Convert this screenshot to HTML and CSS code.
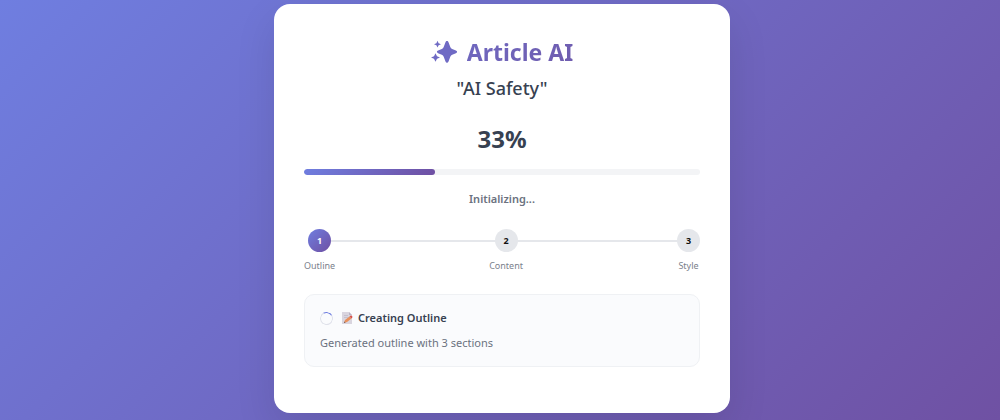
FILE: index.html
```html
<!DOCTYPE html>
<html lang="en">
<head>
    <meta charset="UTF-8">
    <meta name="viewport" content="width=device-width, initial-scale=1.0">
    <title>Article AI</title>
    <link rel="stylesheet" href="styles.css">
</head>
<body>
    <main class="card">
        <h1 class="logo">
            <svg class="logo-icon" viewBox="0 0 26 24" aria-hidden="true">
                <g fill="#6f6ac4">
                    <path d="M16 1c.8 0 1.200.4 1.500 1.200l1.800 4.800q.5 1.400 1.900 1.900l3.700 1.500c1.600.6 1.600 2.300 0 2.900l-3.700 1.500q-1.400.5-1.900 1.900l-1.800 4.800c-.6 1.600-2.400 1.600-3 0l-1.800-4.800q-.5-1.400-1.900-1.900l-3.700-1.500c-1.600-.6-1.600-2.300 0-2.900l3.700-1.500q1.400-.5 1.900-1.900l1.800-4.800c.3-.8.700-1.200 1.500-1.200z"/>
                    <path d="M6.500.8l1.100 2.400 2.400 1-2.400 1-1.100 2.400-1.100-2.400-2.400-1 2.400-1z"/>
                    <path d="M4.500 13.200l1.500 3 3 1.300-3 1.300-1.500 3-1.500-3-3-1.300 3-1.300z"/>
                </g>
            </svg>
            <span class="logo-text">Article AI</span>
        </h1>
        <h2 class="topic">"AI Safety"</h2>

        <div class="percent">33%</div>
        <div class="progress" role="progressbar" aria-label="Progress" aria-valuenow="33" aria-valuemin="0" aria-valuemax="100">
            <div class="progress-fill" style="width: 33%"></div>
        </div>
        <p class="status">Initializing...</p>

        <ol class="steps">
            <li class="step active"><span class="step-number">1</span>Outline</li>
            <li class="step"><span class="step-number">2</span>Content</li>
            <li class="step"><span class="step-number">3</span>Style</li>
        </ol>

        <section class="task">
            <h3 class="task-title">
                <span class="spinner"></span>
                <svg class="task-icon" viewBox="0 0 12 12" aria-hidden="true">
                    <path d="M1 0h7l3 3v9H1z" fill="#d9d5df"/>
                    <path d="M8 0l3 3H8z" fill="#b9b3c4"/>
                    <path d="M3 3.500h4M3 5.500h4" stroke="#bcb7c6" stroke-width=".7"/>
                    <path d="M3 11l1-3 4.500-3.500 2 2L6 10z" fill="#e8905c"/>
                    <path d="M8.500 4.500l1-.8c1-.5 2.400.8 1.800 1.800l-.8 1z" fill="#d8504a"/>
                    <path d="M3 11l.5-1.500 1 1z" fill="#5b4a4a"/>
                </svg>
                Creating Outline
            </h3>
            <p class="task-text">Generated outline with 3 sections</p>
        </section>
    </main>
</body>
</html>
```
FILE: styles.css
```css
* {
    margin: 0;
    padding: 0;
    box-sizing: border-box;
}

body {
    min-height: 100vh;
    display: flex;
    justify-content: center;
    align-items: flex-start;
    padding: 4px 0 4px 4px;
    font-family: "Noto Sans", "Open Sans", sans-serif;
    color: #374151;
    background: linear-gradient(135deg, #6f7ee0 0%, #6f51a3 100%);
}

.card {
    width: 100%;
    max-width: 456px;
    padding: 32px 30px 46px;
    background: white;
    border-radius: 16px;
    box-shadow: 0 16px 40px rgba(0, 0, 0, 0.1);
    text-align: center;
}

.logo {
    display: flex;
    justify-content: center;
    align-items: center;
    gap: 10px;
    font-size: 23px;
    line-height: 32px;
}

.logo-icon {
    width: 26px;
    height: 24px;
}

.logo-text {
    background: linear-gradient(135deg, #6f68c0, #6f5cae);
    background-clip: text;
    -webkit-background-clip: text;
    color: transparent;
}

.topic {
    margin-top: 8px;
    font-size: 18px;
    font-weight: 500;
    line-height: 24px;
}

.percent {
    margin-top: 23px;
    font-size: 24px;
    font-weight: 700;
    line-height: 32px;
}

.progress {
    height: 6px;
    margin-top: 14px;
    background: #f3f4f6;
    border-radius: 3px;
    overflow: hidden;
}

.progress-fill {
    height: 100%;
    background: linear-gradient(135deg, #6f7ee0, #6f4fa2);
    border-radius: 3px;
}

.status {
    margin-top: 16px;
    font-size: 11px;
    font-weight: 600;
    line-height: 16px;
    color: #6b7280;
}

.steps {
    position: relative;
    display: flex;
    justify-content: space-between;
    margin-top: 22px;
    list-style: none;
}

/* line behind the step circles */
.steps::before {
    content: "";
    position: absolute;
    top: 11px;
    left: 16px;
    right: 12px;
    height: 2px;
    background: #e5e7eb;
}

.step {
    position: relative;
    display: flex;
    flex-direction: column;
    align-items: center;
    gap: 7px;
    font-size: 9px;
    line-height: 14px;
    color: #7b818c;
}

.step-number {
    display: flex;
    justify-content: center;
    align-items: center;
    width: 23px;
    height: 23px;
    border-radius: 50%;
    background: #e5e7eb;
    color: #111;
    font-weight: 700;
}

.step.active .step-number {
    background: linear-gradient(135deg, #6f7ee0, #6f4fa2);
    color: white;
}

.task {
    margin-top: 21px;
    padding: 15px;
    border: 1px solid #eff1f4;
    border-radius: 10px;
    background: #fafbfd;
    text-align: left;
}

.task-title {
    display: flex;
    align-items: center;
    font-size: 11px;
    font-weight: 600;
    line-height: 16px;
}

.spinner {
    width: 13px;
    height: 13px;
    margin-right: 8px;
    border: 1px solid #dfe1ea;
    border-top-color: #6f7ee0;
    border-radius: 50%;
    transform: rotate(15deg);
}

.task-icon {
    width: 12px;
    height: 12px;
    margin-right: 5px;
}

.task-text {
    margin-top: 9px;
    font-size: 11px;
    line-height: 16px;
    color: #6b7280;
}
```
